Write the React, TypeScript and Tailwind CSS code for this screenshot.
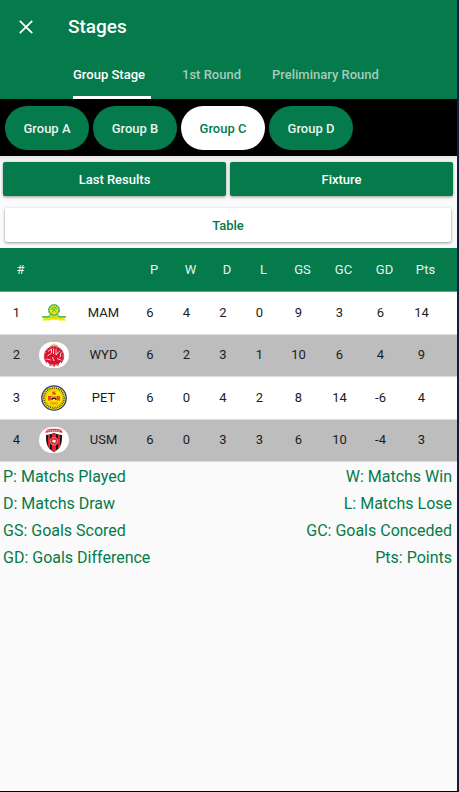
import React from "react";

const tabs = ["Group Stage", "1st Round", "Preliminary Round"];
const groups = ["Group A", "Group B", "Group C", "Group D"];

function SundownsLogo() {
  return (
    <svg viewBox="0 0 30 26" className="h-[26px] w-[30px]" aria-hidden="true">
      <circle cx="15" cy="10" r="5.2" fill="#e6e61a" stroke="#2fae58" strokeWidth="1.5" strokeDasharray="2.200 .4" />
      <path d="M12 9.500c1-3 5-3 6 0M12.500 8l5 4M17 7.500l-4 5" fill="none" stroke="#58b92e" strokeWidth="1" />
      <path d="M3 17h6.500c2 0 3 1 5.500 1s3.500-1 5.500-1H27l-1.800 1.500 1.800 2H19.500l-1.500-.8h-6l-1.500.8H3l1.800-2z" fill="#f2e600" />
      <path d="M3 16.800h6.500l3-2.300M27 16.800h-6.500l-3-2.300" fill="none" stroke="#25a74e" strokeWidth="1.200" />
      <path d="M11.500 14.800c2 1.600 5 1.600 7 0l1.500 2.400c-3 1.600-7 1.600-10 0z" fill="#c9df1c" />
    </svg>
  );
}

function WydadLogo() {
  return (
    <svg viewBox="0 0 30 26" className="h-[26px] w-[30px]" aria-hidden="true">
      <rect width="30" height="26" rx="13" fill="#fff" />
      <path d="M10.500 4.500h9l-2-1.700h-5z" fill="#aaa" />
      <path d="M15 1l2.200 2.800h-4.400z" fill="#f0d810" />
      <circle cx="15" cy="14.200" r="10.200" fill="#d5152f" />
      <path d="M9 9.500l3.500-2.500v4l-4 3M14.500 6.500v5.500M17 7v6l3.500-4M22 10.500l-1 5M7.500 17l4.500 1M13.500 15l1.500 4M18 16.500l4 1.500" fill="none" stroke="#fff" strokeWidth=".8" />
      <circle cx="15" cy="14.200" r="9.200" fill="none" stroke="#fff" strokeWidth=".5" strokeDasharray="1.500 2" />
      <path d="M8 20.500l2 2.500M13 22.500v2.500M17 22.500v2.500M22 20.500l-2 2.500" stroke="#fff" strokeWidth="1.300" />
    </svg>
  );
}

function PetroLogo() {
  return (
    <svg viewBox="0 0 30 26" className="h-[26px] w-[30px]" aria-hidden="true">
      <circle cx="15" cy="13" r="12.200" fill="#f7e600" stroke="#33338e" strokeWidth="1.300" />
      <circle cx="15" cy="13" r="10.100" fill="none" stroke="#3a3710" strokeWidth="1.500" strokeDasharray=".9 1" />
      <circle cx="15" cy="13" r="8.600" fill="#fbe400" stroke="#a89a20" strokeWidth=".5" />
      <path d="M13.300 9.500v-3h3.400l-1 1.500h1.300v1.500zM9 11h3v4.500H9zM18 11h3v4.500h-3z" fill="#e9481c" />
      <path d="M12 11h6v2h-6z" fill="#f08e14" />
      <path d="M12.500 15v-2h1.500l1-.6 1 .6h1.500v2h-1.200v-1h-2.600v1z" fill="#1d1d19" />
      <path d="M11.500 18.200a1 1 0 102 0 1 1 0 10-2 0M14 18.500a1 1 0 102 0 1 1 0 10-2 0M16.500 18.200a1 1 0 102 0 1 1 0 10-2 0" fill="none" stroke="#ee6a18" strokeWidth=".7" />
    </svg>
  );
}

function UsmLogo() {
  return (
    <svg viewBox="0 0 30 26" className="h-[26px] w-[30px]" aria-hidden="true">
      <rect width="30" height="26" rx="13" fill="#fff" />
      <path d="M6.500 6c0-2.500 1.500-3.600 3-3.800 3.600-.5 7.400-.5 11 0 1.500.2 3 1.300 3 3.800-5.500-1.800-11.500-1.800-17 0z" fill="#ee3a42" />
      <path d="M8.500 3.800h13" stroke="#fff" strokeWidth="1" strokeDasharray="1 1.200" />
      <path d="M7 8c3-.2 5.500-.8 8-2 2.500 1.200 5 1.800 8 2 .2 8-1 13.500-8 17-7-3.500-8.200-9-8-17z" fill="#1b1718" />
      <path d="M9 8l2-.3v14L9 19zM13 7l2-1 2 1v17l-2 1-2-1zM19 7.700l2 .3v11l-2 2.700z" fill="#e3232d" />
      <circle cx="15" cy="14.200" r="3.900" fill="#e3232d" stroke="#f8a9ac" strokeWidth=".6" />
      <path d="M12.800 14.500l1.700-2 2.500 1-1 2.500zM13 12.500l3 .5" fill="#fff" />
    </svg>
  );
}

const columns = ["P", "W", "D", "L", "GS", "GC", "GD", "Pts"];

const teams = [
  { name: "MAM", Logo: SundownsLogo, stats: [6, 4, 2, 0, 9, 3, 6, 14] },
  { name: "WYD", Logo: WydadLogo, stats: [6, 2, 3, 1, 10, 6, 4, 9] },
  { name: "PET", Logo: PetroLogo, stats: [6, 0, 4, 2, 8, 14, -6, 4] },
  { name: "USM", Logo: UsmLogo, stats: [6, 0, 3, 3, 6, 10, -4, 3] },
];

const legend = [
  ["P: Matchs Played", "W: Matchs Win"],
  ["D: Matchs Draw", "L: Matchs Lose"],
  ["GS: Goals Scored", "GC: Goals Conceded"],
  ["GD: Goals Difference", "Pts: Points"],
];

function Header() {
  return (
    <header className="bg-[#057a4b] text-white">
      <div className="flex h-[54px] items-center">
        <button type="button" aria-label="Close" className="ml-[15px] flex size-[22px] items-center justify-center">
          <svg viewBox="0 0 14 14" className="size-[14px]" fill="none" stroke="currentColor" strokeWidth="1.800">
            <path d="M.8.8l12.400 12.400M13.200.8L.8 13.200" />
          </svg>
        </button>
        <h1 className="ml-[31px] text-[19px] font-medium">Stages</h1>
      </div>
      <nav className="flex h-[45px] gap-[31px] pl-[73px] text-[13px] font-medium">
        {tabs.map((tab, i) => (
          <button
            type="button"
            key={tab}
            className={
              i === 0
                ? "min-w-[78px] border-b-3 border-white text-left whitespace-nowrap"
                : "border-b-3 border-transparent whitespace-nowrap text-[#a3cdbb]"
            }
          >
            {tab}
          </button>
        ))}
      </nav>
    </header>
  );
}

function Standings() {
  return (
    <table className="w-full table-fixed border-collapse text-center text-[13px] text-[#1c1c1c]">
      <colgroup>
        <col className="w-[33px]" />
        <col className="w-[42px]" />
        <col className="w-[57px]" />
        <col className="w-[36px]" />
        <col className="w-[37px]" />
        <col className="w-[36px]" />
        <col className="w-[37px]" />
        <col className="w-[41px]" />
        <col className="w-[41px]" />
        <col className="w-[41px]" />
        <col className="w-[56px]" />
      </colgroup>
      <thead>
        <tr className="h-[43px] border-b border-[#5fa98a] bg-[#057a4b] text-[#e8f4ef]">
          <th className="p-0 pl-2 font-normal">#</th>
          <td />
          <td />
          {columns.map((c) => (
            <th key={c} className="p-0 pl-2 font-normal last:pr-[15px]">
              {c}
            </th>
          ))}
        </tr>
      </thead>
      <tbody>
        {teams.map(({ name, Logo, stats }, i) => (
          <tr key={name} className="h-[43px] border-b border-[#dedede] bg-white even:h-[42px] even:bg-[#bdbdbd]">
            <td className="p-0">{i + 1}</td>
            <td className="p-0">
              <div className="flex justify-center">
                <Logo />
              </div>
            </td>
            <td className="p-0">{name}</td>
            {stats.map((s, j) => (
              <td key={columns[j]} className="p-0 last:pr-[15px]">
                {s}
              </td>
            ))}
          </tr>
        ))}
      </tbody>
    </table>
  );
}

export default function App() {
  return (
    <div className="flex min-h-screen flex-col border-r-2 border-b border-r-[#1c1c38] border-b-black bg-[#fafafa] font-[Roboto,sans-serif]">
      <Header />
      <div className="flex h-[57px] gap-1 bg-black px-[5px] pt-[7px] pb-[6px]">
        {groups.map((g) => (
          <button
            type="button"
            key={g}
            className={
              g === "Group C"
                ? "w-[84px] rounded-full bg-white pt-[2px] text-[13px] font-medium text-[#057a4b]"
                : "w-[84px] rounded-full bg-[#057a4b] pt-[2px] text-[13px] font-medium text-[#e8f4ef]"
            }
          >
            {g}
          </button>
        ))}
      </div>
      <div className="flex gap-1 bg-linear-to-b from-[#e6e6e6] to-[#fafafa] to-20% pt-[6px] pr-1 pl-[3px] text-[13px] font-medium text-white">
        <button type="button" className="h-[34px] flex-1 rounded-xs bg-[#057a4b] pt-[2px] shadow-[0_1px_3px_rgba(0,0,0,0.4)]">
          Last Results
        </button>
        <button type="button" className="h-[34px] flex-1 rounded-xs bg-[#057a4b] pt-[2px] shadow-[0_1px_3px_rgba(0,0,0,0.4)]">
          Fixture
        </button>
      </div>
      <div className="flex pt-3 pr-[6px] pb-[6px] pl-[5px]">
        <button
          type="button"
          className="h-[34px] flex-1 rounded-xs bg-white pt-[2px] text-[13px] font-medium text-[#057a4b] shadow-[0_1px_3px_rgba(0,0,0,0.4)]"
        >
          Table
        </button>
      </div>
      <Standings />
      <ul className="pt-[2px] pr-[5px] pl-[3px] text-base text-[#057a4b]">
        {legend.map(([left, right]) => (
          <li key={left} className="flex h-[27px] items-center justify-between">
            <span>{left}</span>
            <span>{right}</span>
          </li>
        ))}
      </ul>
    </div>
  );
}
